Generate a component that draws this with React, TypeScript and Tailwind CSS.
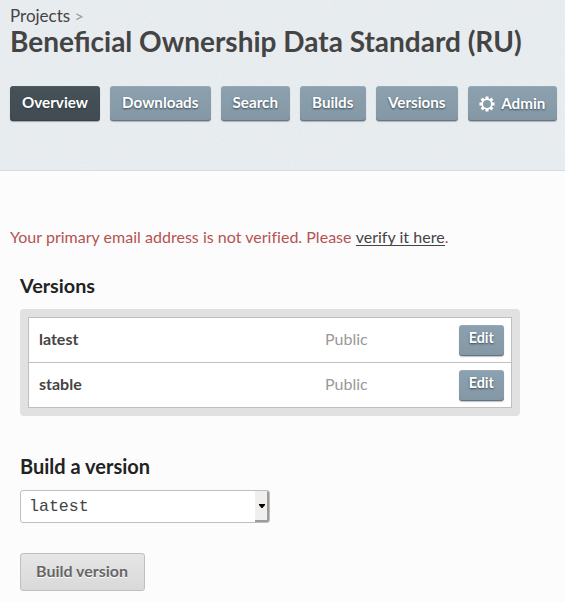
import React from 'react';

const tabs = [
  { label: 'Overview', width: 'w-[90px]', active: true },
  { label: 'Downloads', width: 'w-[101.5px]' },
  { label: 'Search', width: 'w-[69.5px]' },
  { label: 'Builds', width: 'w-[66.5px]' },
  { label: 'Versions', width: 'w-[82.5px]' },
  { label: 'Admin', width: 'w-[89.5px]', icon: true },
];

const versions = ['latest', 'stable'];

const buttonBase =
  'flex shrink-0 justify-center rounded-[3.5px] font-bold text-white [text-shadow:0_1px_2px_rgba(30,45,55,0.75)]';
const buttonBlue =
  'bg-linear-to-b from-[#8ca1af] to-[#8497a5] shadow-[inset_0_1px_0_#98abb8,inset_0_-1px_0_#65747e,0_1px_1px_rgba(70,80,90,0.35)]';
const buttonDark =
  'bg-linear-to-b from-[#465158] to-[#414b51] shadow-[inset_0_1px_0_#505b62,inset_0_-1px_0_#3a4348,0_1px_1px_rgba(70,80,90,0.45)]';

function Gear() {
  const teeth = [0, 45, 90, 135, 180, 225, 270, 315];
  return (
    <svg width="16" height="16" viewBox="0 0 16 16" className="mt-[10px] mr-[6px] shrink-0" fill="white">
      <circle cx="8" cy="8" r="4.9" fill="none" stroke="white" strokeWidth="1.8" />
      {teeth.map((a) => (
        <rect key={a} x="6.5" y="0.4" width="3" height="3.2" rx="0.2" transform={`rotate(${a} 8 8)`} />
      ))}
    </svg>
  );
}

function Grain() {
  return (
    <svg className="pointer-events-none absolute inset-0 h-full w-full opacity-[0.05]" aria-hidden="true">
      <filter id="grain">
        <feTurbulence type="fractalNoise" baseFrequency="0.6" numOctaves="2" stitchTiles="stitch" />
        <feColorMatrix type="matrix" values="1.6 0 0 0 0  0 1.6 0 0 0  0 0 1.6 0 0  0 0 0 0 1" />
      </filter>
      <rect width="100%" height="100%" filter="url(#grain)" />
    </svg>
  );
}

export default function App() {
  return (
    <div className="h-[602px] w-[565px] overflow-hidden bg-[#fcfcfc] font-['Lato',sans-serif] text-[#444]">
      <header className="relative h-[171px] border-b border-[#d4dee2] bg-[#e8edf0]">
        <Grain />
        <div className="relative px-[10px] pt-[5px]">
          <div className="h-[21px] text-[17px] leading-[22px]">
            Projects <span className="text-[16px] text-[#999]">&gt;</span>
          </div>
          <h1 className="h-[31px] text-[28px] leading-[30px] font-bold whitespace-nowrap">
            Beneficial Ownership Data Standard (RU)
          </h1>
          <nav className="mt-[29px] flex gap-[9.5px]">
            {tabs.map((t) => (
              <a
                key={t.label}
                className={`${buttonBase} ${t.active ? buttonDark : buttonBlue} ${t.width} h-[35px] text-[15.2px] leading-[33px]`}
              >
                {t.icon && <Gear />}
                <span className={t.icon ? 'pt-px' : ''}>{t.label}</span>
              </a>
            ))}
          </nav>
        </div>
      </header>

      <main className="pt-[55px]">
        <p className="h-[22px] px-[10px] text-[16px] leading-[22px] tracking-[0.02px] whitespace-nowrap text-[#b55252]">
          Your primary email address is not verified. Please{' '}
          <a className="inline-block h-[20px] border-b border-[#444] leading-[22px] text-[#444]">verify it here</a>.
        </p>

        <section className="mt-[24px] ml-[20px] w-[500px]">
          <h3 className="h-[26px] text-[19.8px] leading-[26px] font-bold text-[#222]">Versions</h3>
          <div className="mt-[11px] rounded-[4px] bg-[#e1e1e1] p-[8px]">
            <ul className="border border-[#bfbfbf] bg-white">
              {versions.map((v, i) => (
                <li
                  key={v}
                  className={`flex pr-[7px] pl-[10px] text-[16px] leading-[42px] ${i ? 'h-[45px] border-t border-[#bfbfbf]' : 'h-[44px]'}`}
                >
                  <span className="w-[286px] font-bold">{v}</span>
                  <span className="flex-1 text-[#999]">Public</span>
                  <a className={`${buttonBase} ${buttonBlue} mt-[7px] h-[31px] w-[45.5px] text-[14.4px] leading-[26px]`}>Edit</a>
                </li>
              ))}
            </ul>
          </div>
        </section>

        <section className="mt-[37px] ml-[20px]">
          <h3 className="h-[26px] text-[20px] leading-[26px] font-bold text-[#222]">Build a version</h3>
          <div className="mt-[11px] flex h-[33px] w-[250px] justify-between rounded-[3px] border border-[#bfbfbf] bg-white">
            <span className="pl-[8px] font-['Liberation_Mono',monospace] text-[16.6px] leading-[31px]">latest</span>
            <span className="flex w-[14px] items-center justify-center rounded-r-[2px] border-r-2 border-b-2 border-[#9c9c9c] bg-[#f0efee]">
              <svg width="6" height="4" viewBox="0 0 6 4" className="ml-[2px]">
                <path d="M0 0h6v1L3.5 4h-1L0 1z" fill="#000" />
              </svg>
            </span>
          </div>
          <button className="mt-[30px] block h-[38px] w-[125px] rounded-[3px] border border-[#bfbfbf] bg-linear-to-b from-[#e6e6e6] to-[#d9d9d9] pr-[1px] pb-[2px] text-[16px] leading-[32px] font-bold text-[#666] [text-shadow:0_1px_0_#fff]">
            Build version
          </button>
        </section>
      </main>
    </div>
  );
}
